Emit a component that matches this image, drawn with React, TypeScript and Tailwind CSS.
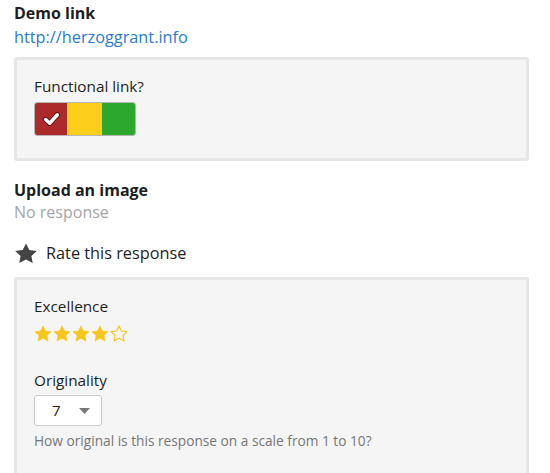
import React from 'react';

const STAR = 'M12 1.2l3.3 6.9 7.6.9-5.6 5.2 1.5 7.5L12 18l-6.8 3.7 1.5-7.5L1.1 9l7.6-.9z';

const Star = ({ filled }: { filled: boolean }) => (
  <svg width="18" height="17" viewBox="0 0 24 23" className="block">
    <path
      d={STAR}
      fill={filled ? '#f8c51c' : 'none'}
      stroke="#f8c51c"
      strokeWidth={filled ? 0.8 : 1.5}
      strokeLinejoin="round"
    />
  </svg>
);

export default function App() {
  const rating = 4;

  return (
    <div className="min-h-[473px] bg-white px-[14px] pt-[2px] text-[#1e1e1e] [font-family:'Open_Sans',sans-serif]">
      {/* Demo link */}
      <div className="text-[16px] font-bold leading-[22px]">Demo link</div>
      <a className="mt-[2px] block text-[16.3px] leading-[22px] text-[#2a7ad3]">http://herzoggrant.info</a>

      <div className="mt-[9px] w-[515px] rounded-[3px] border-[3px] border-[#e6e6e6] bg-[#f5f5f5] px-[17px] pt-[16px] pb-[22px]">
        <div className="text-[15.3px] leading-[20px]">Functional link?</div>
        <div className="mt-[6px] flex h-[34px] w-[102px] overflow-hidden rounded-[3px] border border-[#b5b5b5]">
          <div className="flex w-[32px] items-center justify-center bg-[#ad2a2a]">
            <svg width="17" height="14" viewBox="0 0 16 13">
              <path d="M2.5 7l3.8 3.5L13.5 2.5" fill="none" stroke="#5a1010" strokeWidth="5" strokeLinecap="round" strokeLinejoin="round" />
              <path d="M2.5 7l3.8 3.5L13.5 2.5" fill="none" stroke="#fff" strokeWidth="3.3" strokeLinecap="round" strokeLinejoin="round" />
            </svg>
          </div>
          <div className="w-[35px] bg-[#fdcf1a]" />
          <div className="flex-1 bg-[#2ca82c]" />
        </div>
      </div>

      {/* Upload */}
      <div className="mt-[18px] text-[16px] font-bold leading-[22px]">Upload an image</div>
      <div className="text-[16px] leading-[22px] text-[#a5a5a5]">No response</div>

      <div className="mt-[19px] flex items-center gap-[8px]">
        <svg width="24" height="21" viewBox="0 0 24 22" preserveAspectRatio="none" className="block">
          <path d="M12 .5l3.3 6.8 7.5 1-5.4 5.2 1.3 7.5L12 17.4 5.3 21l1.3-7.5L1.2 8.3l7.5-1z" fill="#444" />
        </svg>
        <span className="text-[16.3px] leading-[22px]">Rate this response</span>
      </div>

      <div className="mt-[13px] w-[515px] rounded-t-[3px] border-[3px] border-b-0 border-[#e6e6e6] bg-[#f5f5f5] px-[17px] pt-[16px] pb-[30px]">
        <div className="text-[15.3px] leading-[20px]">Excellence</div>
        <div className="mt-[9px] flex gap-[1px]">
          {[1, 2, 3, 4, 5].map((i) => (
            <Star key={i} filled={i <= rating} />
          ))}
        </div>

        <div className="mt-[28px] text-[15.3px] leading-[20px]">Originality</div>
        <div className="mt-[5px] flex h-[31px] w-[68px] items-center rounded-[3px] border border-[#ccc] bg-white pl-[17px] pr-[11px]">
          <span className="text-[15px]">7</span>
          <svg width="11" height="6" viewBox="0 0 11 6" className="ml-auto">
            <path d="M0 0h11L5.5 6z" fill="#777" />
          </svg>
        </div>
        <div className="mt-[6px] text-[13.7px] leading-[18px] text-[#777]">How original is this response on a scale from 1 to 10?</div>
      </div>
    </div>
  );
}
